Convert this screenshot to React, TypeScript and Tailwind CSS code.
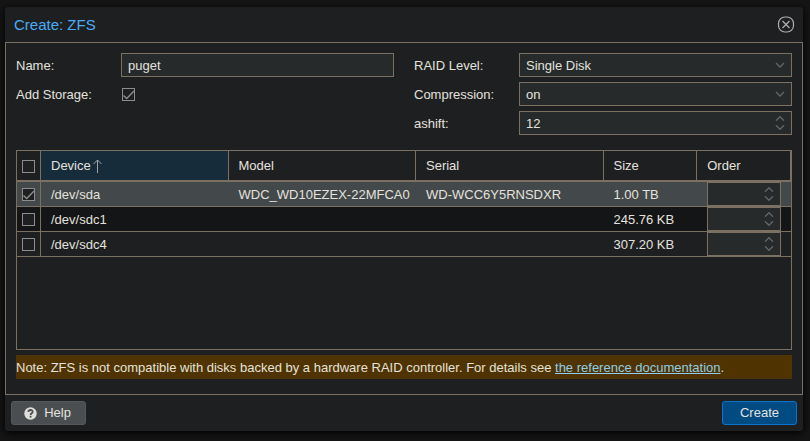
import { useId, useState } from "react";
import type { ReactNode } from "react";

const columns = "grid grid-cols-[24px_2fr_2fr_2fr_1fr_1fr]";

const disks = [
  { device: "/dev/sda", model: "WDC_WD10EZEX-22MFCA0", serial: "WD-WCC6Y5RNSDXR", size: "1.00 TB" },
  { device: "/dev/sdc1", model: "", serial: "", size: "245.76 KB" },
  { device: "/dev/sdc4", model: "", serial: "", size: "307.20 KB" },
];

function Check({ label, id, checked, onChange }: { label?: string; id?: string; checked: boolean; onChange: () => void }) {
  return (
    <span className="grid size-[13px]">
      <input
        type="checkbox"
        id={id}
        aria-label={label}
        checked={checked}
        onChange={onChange}
        className="col-start-1 row-start-1 size-[13px] appearance-none border border-[#8c8c8b] bg-[#1e1f21]"
      />
      {checked && (
        <svg viewBox="0 0 13 13" className="pointer-events-none col-start-1 row-start-1 size-[13px]" fill="none" stroke="#8c8c8b" strokeWidth="1.4" aria-hidden="true">
          <path d="M1.5 7.5 4.7 10.5 12 3" />
        </svg>
      )}
    </span>
  );
}

function Row({ label, children }: { label: string; children: (id: string) => ReactNode }) {
  const id = useId();
  return (
    <div className="flex h-6 items-center">
      <label htmlFor={id} className="w-[105px] shrink-0 pt-0.5">{label}</label>
      {children(id)}
    </div>
  );
}

const field = "h-6 min-w-0 w-full border border-[#7b7062] bg-[#262a2b] text-[#e4e2de] outline-none";

function Select({ id, options }: { id: string; options: string[] }) {
  return (
    <span className="grid w-full items-center">
      <select id={id} className={`${field} col-start-1 row-start-1 appearance-none px-1.5 pt-0.5`}>
        {options.map((o) => <option key={o}>{o}</option>)}
      </select>
      <svg viewBox="0 0 10 6" className="pointer-events-none col-start-1 row-start-1 mr-[7px] h-1.5 w-2.5 justify-self-end" fill="none" stroke="#64676a" strokeWidth="1.3" aria-hidden="true">
        <path d="M1 1 5 5 9 1" />
      </svg>
    </span>
  );
}

function Spinner({ id, label, initial = "" }: { id?: string; label?: string; initial?: string }) {
  const [value, setValue] = useState(initial);
  const step = (by: number) => setValue(String(Number(value || 0) + by));
  return (
    <span className="grid w-full items-center">
      <input id={id} aria-label={label} inputMode="numeric" value={value} onChange={(e) => setValue(e.target.value)} className={`${field} col-start-1 row-start-1 px-1.5`} />
      <span className="col-start-1 row-start-1 mr-[7px] flex flex-col gap-1 justify-self-end">
        <button type="button" aria-label="Increase" onClick={() => step(1)}>
          <svg viewBox="0 0 10 5" className="block h-[5px] w-2.5" fill="none" stroke="#64676a" strokeWidth="1.3"><path d="M1 4.7 5 0.7 9 4.7" /></svg>
        </button>
        <button type="button" aria-label="Decrease" onClick={() => step(-1)}>
          <svg viewBox="0 0 10 5" className="block h-[5px] w-2.5" fill="none" stroke="#64676a" strokeWidth="1.3"><path d="M1 0.3 5 4.3 9 0.3" /></svg>
        </button>
      </span>
    </span>
  );
}

export default function App() {
  const [name, setName] = useState("puget");
  const [storage, setStorage] = useState(true);
  const [picked, setPicked] = useState<string[]>(["/dev/sda"]);
  const toggle = (d: string) => setPicked(picked.includes(d) ? picked.filter((p) => p !== d) : [...picked, d]);
  const all = picked.length === disks.length;

  return (
    <main className="min-h-screen bg-[#141514] pt-[7px] pr-[7px] pb-2.5 pl-[5px] font-['Liberation_Sans',Arial,sans-serif] text-[13px] leading-4 text-[#e4e2de]">
      <section role="dialog" aria-labelledby="title" className="rounded-[3px] bg-[#1e1f21] shadow-[0_2px_8px_#000]">
        <header className="flex h-[35px] items-center justify-between pr-2 pl-[9px]">
          <h1 id="title" className="text-[15px] leading-5 text-[#4cadf5]">Create: ZFS</h1>
          <button type="button" aria-label="Close">
            <svg viewBox="0 0 18 18" className="block size-[18px]" fill="none" stroke="#b0b0b0" aria-hidden="true">
              <rect x="1.5" y="1" width="15" height="15" rx="6.5" strokeWidth="1.2" />
              <path d="M5.5 5 12.5 12M12.5 5 5.5 12" strokeWidth="1.2" />
            </svg>
          </button>
        </header>

        <div className="border border-[#7b7062] px-2.5 pt-2.5 pb-[15px]">
          <div className="grid grid-cols-2 gap-x-5">
            <div className="flex flex-col gap-[5px]">
              <Row label="Name:">
                {(id) => <input id={id} value={name} onChange={(e) => setName(e.target.value)} className={`${field} px-1.5`} />}
              </Row>
              <Row label="Add Storage:">
                {(id) => <span className="pt-px pl-px"><Check id={id} checked={storage} onChange={() => setStorage(!storage)} /></span>}
              </Row>
            </div>
            <div className="flex flex-col gap-[5px]">
              <Row label="RAID Level:">{(id) => <Select id={id} options={["Single Disk", "Mirror", "RAID10", "RAIDZ", "RAIDZ2", "RAIDZ3"]} />}</Row>
              <Row label="Compression:">{(id) => <Select id={id} options={["on", "off", "gzip", "lz4", "zstd"]} />}</Row>
              <Row label="ashift:">{(id) => <Spinner id={id} initial="12" />}</Row>
            </div>
          </div>

          <div className="mt-[15px] min-h-[200px] border border-[#7b7062]">
            <table className="block w-full text-left">
              <thead className="block">
                <tr className={`${columns} h-[31px] border-b-2 border-[#7b7062]`}>
                  <th className="flex items-center border-r border-[#7b7062] pt-0.5 pl-[5px]">
                    <Check label="Select all" checked={all} onChange={() => setPicked(all ? [] : disks.map((d) => d.device))} />
                  </th>
                  <th aria-sort="ascending" className="flex items-center gap-0.5 border-r border-[#7b7062] bg-[#172c3b] px-2.5 font-normal">
                    Device
                    <svg viewBox="0 0 10 14" className="h-3.5 w-2.5" fill="none" stroke="#a0a4a6" aria-hidden="true"><path d="M4.5 14V1M0.5 5 4.5 1 8.5 5" /></svg>
                  </th>
                  {["Model", "Serial", "Size", "Order"].map((h) => (
                    <th key={h} className="flex items-center border-r border-[#7b7062] px-2.5 font-normal">{h}</th>
                  ))}
                </tr>
              </thead>
              <tbody className="block">
                {disks.map((d) => (
                  <tr
                    key={d.device}
                    className={`${columns} h-[25px] border-b border-[#7b7062] ${picked.includes(d.device) ? "bg-[#43484a]" : "even:bg-[#141516]"}`}
                  >
                    <td className="flex items-center border-r border-[#7b7062] pt-px pl-[5px]">
                      <Check label={`Select ${d.device}`} checked={picked.includes(d.device)} onChange={() => toggle(d.device)} />
                    </td>
                    <td className="flex items-center px-2.5 pt-0.5">{d.device}</td>
                    <td className="flex items-center pt-0.5 pl-2.5 whitespace-nowrap">{d.model}</td>
                    <td className="flex items-center pt-0.5 pl-2.5 whitespace-nowrap">{d.serial}</td>
                    <td className="flex items-center pt-0.5 pl-2.5 whitespace-nowrap">{d.size}</td>
                    <td className="flex px-2.5"><Spinner label={`Order of ${d.device}`} /></td>
                  </tr>
                ))}
              </tbody>
            </table>
          </div>

          <p className="mt-[5px] bg-[#4f3300] pt-[5px] pb-[3px]">
            Note: ZFS is not compatible with disks backed by a hardware RAID controller. For details see{" "}
            <a href="#zfs" className="text-[#8fcdea] underline">the reference documentation</a>.
          </p>
        </div>

        <footer className="flex items-center justify-between p-1.5">
          <button type="button" className="flex h-6 w-[75px] items-center justify-center gap-[7px] rounded-[3px] border border-[#55595b] bg-[#4a4e51] pr-0.5">
            <svg viewBox="0 0 13 13" className="size-[13px]" aria-hidden="true">
              <circle cx="6.5" cy="6.5" r="6.2" fill="#e0ded9" />
              <path d="M4.3 4.9C4.5 2.3 8.8 2.4 8.7 4.9 8.6 6.3 6.6 6.3 6.6 7.9" fill="none" stroke="#4a4e51" strokeWidth="1.8" />
              <path d="M5.7 8.8H7.5V10.6H5.7Z" fill="#4a4e51" />
            </svg>
            Help
          </button>
          <button type="button" className="h-6 w-[75px] rounded-[3px] border border-[#0b74cd] bg-[#014b83]">Create</button>
        </footer>
      </section>
    </main>
  );
}
